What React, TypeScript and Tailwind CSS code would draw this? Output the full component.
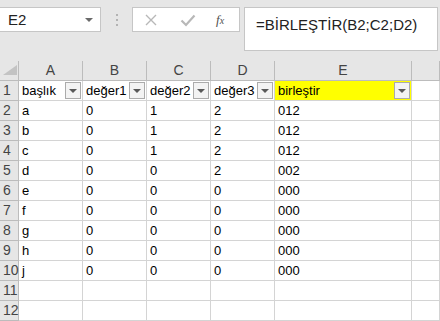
const COLS = ['A', 'B', 'C', 'D', 'E', ''];

const HEADERS = ['başlık', 'değer1', 'değer2', 'değer3', 'birleştir'];

const ROWS: string[][] = [
  ['a', '0', '1', '2', '012'],
  ['b', '0', '1', '2', '012'],
  ['c', '0', '1', '2', '012'],
  ['d', '0', '0', '2', '002'],
  ['e', '0', '0', '0', '000'],
  ['f', '0', '0', '0', '000'],
  ['g', '0', '0', '0', '000'],
  ['h', '0', '0', '0', '000'],
  ['j', '0', '0', '0', '000'],
  ['', '', '', '', ''],
  ['', '', '', '', ''],
];

// filter button inside the header cells
const FilterButton = () => (
  <div className="absolute right-px top-px w-[16px] h-[17px] border border-[#ababab] bg-[#f3f3f3] flex items-center justify-center">
    <div className="w-0 h-0 border-l-[4px] border-r-[4px] border-t-[4px] border-l-transparent border-r-transparent border-t-[#595959]" />
  </div>
);

const gridCols = 'grid grid-cols-[19px_64px_64px_64px_64px_137px_28px]';

export default function App() {
  return (
    <div className="w-[440px] h-[321px] overflow-hidden bg-[#e6e6e6] font-['Liberation_Sans',Arial,sans-serif] text-black">
      {/* Formula bar */}
      <div className="h-[61px] flex items-start pt-[7px]">
        <div className="-ml-px w-[102px] h-[25px] border border-[#c6c6c6] bg-white flex items-center pl-[8px] pr-[7px]">
          <span className="text-[15px] text-[#222] flex-1 leading-none">E2</span>
          <div className="w-0 h-0 border-l-[4px] border-r-[4px] border-t-[4px] border-l-transparent border-r-transparent border-t-[#6a6a6a]" />
        </div>
        <div className="w-[31px] h-[25px] flex flex-col items-center justify-center gap-[3px]">
          <div className="w-[2px] h-[2px] bg-[#b3b3b3]" />
          <div className="w-[2px] h-[2px] bg-[#b3b3b3]" />
          <div className="w-[2px] h-[2px] bg-[#b3b3b3]" />
        </div>
        <div className="w-[108px] h-[25px] border border-[#c6c6c6] bg-white flex items-center">
          <svg width="14" height="14" viewBox="0 0 14 14" className="ml-[11px]">
            <path d="M2 2 L12 12 M12 2 L2 12" stroke="#b8b8b8" strokeWidth="1.4" fill="none" />
          </svg>
          <svg width="16" height="14" viewBox="0 0 16 14" className="ml-[22px]">
            <path d="M1.5 7.5 L6 12 L14.5 2.5" stroke="#b8b8b8" strokeWidth="2.2" fill="none" />
          </svg>
          <span className="ml-[20px] text-[13px] italic font-['Liberation_Serif',serif] text-[#505050] leading-none">
            f<span className="text-[10px]">x</span>
          </span>
        </div>
        <div className="ml-[4px] w-[194px] h-[44px] border border-[#c6c6c6] bg-white pl-[11px] pt-[5px]">
          <span className="text-[15px] text-[#222]">=BİRLEŞTİR(B2;C2;D2)</span>
        </div>
      </div>

      {/* Sheet */}
      <div className={gridCols}>
        <div className="h-[20px] border-r border-b border-[#bcbcbc] bg-[#e6e6e6] flex items-end pl-[3px] pb-[5px]">
          <svg width="14" height="10" viewBox="0 0 14 10">
            <path d="M14 0 L14 10 L0 10 Z" fill="#c3c3c3" />
          </svg>
        </div>
        {COLS.map((c, i) => (
          <div
            key={i}
            className="h-[20px] border-r border-b border-[#bcbcbc] bg-[#e6e6e6] flex items-center justify-center text-[14px] text-[#444]"
          >
            {c}
          </div>
        ))}

        {[HEADERS, ...ROWS].map((row, r) => (
          <Row key={r} index={r + 1} cells={row} header={r === 0} />
        ))}
      </div>
    </div>
  );
}

const Row = ({ index, cells, header }: { index: number; cells: string[]; header: boolean }) => (
  <>
    <div className="h-[20px] border-r border-b border-[#bcbcbc] bg-[#e6e6e6] pl-[3px] flex items-center text-[14px] text-[#444]">
      {index}
    </div>
    {cells.map((v, i) => (
      <div
        key={i}
        className={`relative h-[20px] border-r border-b border-[#d4d4d4] pl-[3px] flex items-center text-[13px] whitespace-nowrap ${
          header && i === 4 ? 'bg-[#ffff00]' : 'bg-white'
        }`}
      >
        {v}
        {header && <FilterButton />}
      </div>
    ))}
    <div className="h-[20px] border-r border-b border-[#d4d4d4] bg-white" />
  </>
);
